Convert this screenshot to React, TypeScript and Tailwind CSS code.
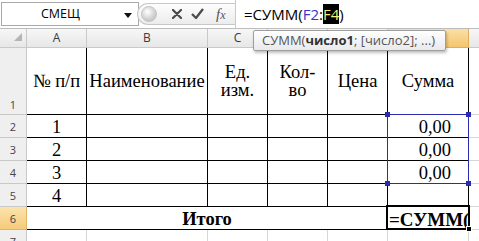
import React from "react";

const serif = "font-['Liberation_Serif',serif]";
const ui = "font-['Open_Sans',sans-serif]";

function RowHead({ n, selected, tall }: { n: number; selected?: boolean; tall?: boolean }) {
    return (
        <div
            className={`flex justify-center border-r border-b ${ui} text-[11px] text-[#444] ${
                tall ? "items-end pb-[1px]" : "items-center pt-[3px]"
            } ${
                selected
                    ? "bg-gradient-to-b from-[#fbe3ae] to-[#f6cb78] border-[#e2b465]"
                    : "bg-[#efefef] border-[#c8c8c8]"
            }`}
        >
            {n}
        </div>
    );
}

function Cell({ children, className = "" }: { children?: React.ReactNode; className?: string }) {
    return (
        <div className={`flex items-center border-r border-b border-black ${serif} text-[18.5px] leading-none text-black ${className}`}>
            {children}
        </div>
    );
}

function Blank() {
    return <div className="border-b border-[#d6d6d6] bg-white" />;
}

function ColHead({ label, selected }: { label: string; selected?: boolean }) {
    return (
        <div
            className={`flex items-center justify-center border-r border-b ${ui} text-[12px] text-[#3a3a3a] ${
                selected
                    ? "bg-gradient-to-b from-[#fbe0a6] to-[#f4c56c] border-[#dcae5e]"
                    : "bg-gradient-to-b from-[#f7f7f7] to-[#e7e7e7] border-[#c9c9c9]"
            }`}
        >
            {label}
        </div>
    );
}

function FormulaBar() {
    return (
        <div className="flex h-[29px] border-b border-[#bcbcbc] bg-white">
            <div className="relative flex w-[138px] items-center border border-[#a9a9a9] mt-[2px] mb-[2px] ml-[1px]">
                <span className={`${ui} text-[12.5px] text-black ml-[39px]`}>СМЕЩ</span>
                <svg className="absolute left-[122px] top-[10px]" width="8" height="5" viewBox="0 0 8 5">
                    <polygon points="0,0 8,0 4,5" fill="#111" />
                </svg>
            </div>
            <div className="relative flex w-[96px] items-center">
                <div className="absolute left-[-2px] top-[3px] h-[22px] w-[98px] rounded-l-full border border-r-0 border-[#c8c8c8] bg-gradient-to-b from-[#fdfdfd] to-[#ececec]" />
                <div className="absolute left-[2px] top-[6px] h-[16px] w-[16px] rounded-full bg-[radial-gradient(circle_at_40%_35%,#ffffff,#cfcfcf_60%,#b9b9b9)] border border-[#c4c4c4]" />
                <svg className="absolute left-[33px] top-[9px]" width="10" height="10" viewBox="0 0 10 10">
                    <path d="M1 1 L9 9 M9 1 L1 9" stroke="#4a4a4a" strokeWidth="2.2" strokeLinecap="round" />
                </svg>
                <svg className="absolute left-[52px] top-[8px]" width="13" height="12" viewBox="0 0 13 12">
                    <path d="M1 6 L5 10 L12 1" stroke="#4a4a4a" strokeWidth="2.2" fill="none" strokeLinejoin="round" />
                </svg>
                <span className={`absolute left-[77px] top-[3px] ${serif} italic text-[15px] text-[#555]`}>
                    f<span className="text-[12px]">x</span>
                </span>
            </div>
            <div className="flex flex-1 items-center border-l border-[#c8c8c8] pl-[8px]">
                <span className={`${ui} text-[15px] text-black leading-none`}>
                    =СУММ(<span className="text-[#3434c8]">F2</span>:
                    <span className="bg-black text-[#f0f07a]">F4</span>)
                </span>
            </div>
        </div>
    );
}

export default function App() {
    const nums = ["1", "2", "3", "4"];
    return (
        <div className="relative h-[241px] w-[479px] overflow-hidden bg-white">
            <FormulaBar />
            <div className="grid grid-cols-[27px_60px_121px_60px_60px_60px_81px_1fr] grid-rows-[19px_67px_23px_23px_23px_23px_23px_23px]">
                <div className="relative border-r border-b border-[#c9c9c9] bg-gradient-to-b from-[#f7f7f7] to-[#e7e7e7]">
                    <svg className="absolute left-[14px] top-[4px]" width="8" height="8" viewBox="0 0 8 8">
                        <polygon points="0,8 8,8 8,0" fill="#b5b5b5" />
                    </svg>
                </div>
                <ColHead label="A" />
                <ColHead label="B" />
                <ColHead label="C" />
                <ColHead label="D" />
                <ColHead label="E" />
                <ColHead label="F" selected />
                <div className="border-b border-[#c9c9c9] bg-gradient-to-b from-[#f7f7f7] to-[#e7e7e7]" />

                <RowHead n={1} tall />
                <Cell className="justify-center">№ п/п</Cell>
                <Cell className="justify-center">Наименование</Cell>
                <Cell className="justify-center text-center leading-[21px]">
                    Ед.
                    <br />
                    изм.
                </Cell>
                <Cell className="justify-center text-center leading-[21px]">
                    Кол-
                    <br />
                    во
                </Cell>
                <Cell className="justify-center">Цена</Cell>
                <Cell className="justify-center">Сумма</Cell>
                <Blank />

                {nums.map((n, i) => (
                    <React.Fragment key={n}>
                        <RowHead n={i + 2} />
                        <Cell className="justify-center pt-[3px]">{n}</Cell>
                        <Cell />
                        <Cell />
                        <Cell />
                        <Cell />
                        <Cell className="justify-end pr-[17px] pt-[3px]">{i < 3 ? "0,00" : ""}</Cell>
                        <Blank />
                    </React.Fragment>
                ))}

                <RowHead n={6} selected />
                <Cell className="col-span-5 justify-center pt-[3px] font-bold">Итого</Cell>
                <Cell className="overflow-hidden whitespace-nowrap pl-[1px] pt-[3px] font-bold text-[19px]">=СУММ(</Cell>
                <Blank />

                <RowHead n={7} />
                {[0, 1, 2, 3, 4, 5].map((k) => (
                    <div key={k} className="border-r border-b border-[#d6d6d6]" />
                ))}
                <Blank />
            </div>

            {/* range highlight F2:F4 */}
            <div className="pointer-events-none absolute left-[387px] top-[114px] h-[70px] w-[82px] border border-[#2b2bb0]">
                <div className="absolute -left-[3px] -top-[3px] h-[5px] w-[5px] bg-[#2b2bb0]" />
                <div className="absolute -right-[3px] -top-[3px] h-[5px] w-[5px] bg-[#2b2bb0]" />
                <div className="absolute -left-[3px] -bottom-[3px] h-[5px] w-[5px] bg-[#2b2bb0]" />
                <div className="absolute -right-[3px] -bottom-[3px] h-[5px] w-[5px] bg-[#2b2bb0]" />
            </div>

            {/* active cell F6 */}
            <div className="pointer-events-none absolute left-[386px] top-[205px] h-[25px] w-[84px] border-2 border-black">
                <div className="absolute -right-[4px] -bottom-[4px] h-[6px] w-[6px] border border-white bg-black" />
            </div>

            {/* function tooltip */}
            <div
                className={`absolute left-[253px] top-[30px] flex h-[21px] w-[193px] items-center rounded-[2px] border border-[#9e9e9e] bg-gradient-to-b from-white to-[#e9e9ee] pl-[8px] shadow-[1px_2px_3px_rgba(0,0,0,0.25)] ${ui} text-[13px] text-[#555] whitespace-nowrap`}
            >
                СУММ(<span className="font-bold text-[#333]">число1</span>; [число2]; ...)
            </div>
        </div>
    );
}
